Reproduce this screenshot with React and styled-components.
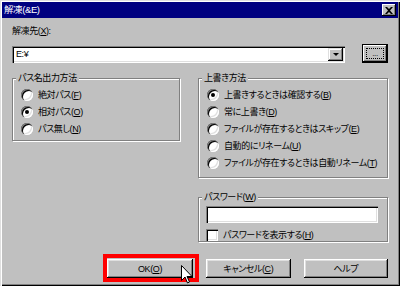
import React from 'react'
import styled, { createGlobalStyle } from 'styled-components'

const Global = createGlobalStyle`
  html, body { margin: 0; padding: 0; background: #c0c0c0; }
  body {
    font-family: "Liberation Sans", "Noto Sans CJK JP", sans-serif;
    font-size: 9px;
    letter-spacing: -0.4px;
    font-feature-settings: "palt";
    color: #000;
  }
`

const Window = styled.div`
  width: 400px;
  height: 286px;
  box-sizing: border-box;
  background: #c0c0c0;
  padding: 2px;
  box-shadow: inset 1px 1px #dfdfdf, inset 2px 2px #fff, inset -1px -1px #000, inset -2px -2px #808080;
  display: flex;
  flex-direction: column;
`

const TitleBar = styled.div`
  height: 16px;
  background: #000080;
  color: #fff;
  display: flex;
  align-items: center;
  justify-content: space-between;
  padding: 0 2px 0 2px;
  font-size: 9.5px;
`

const TitleText = styled.span`
  line-height: 16px;
`

const CloseBox = styled.div`
  width: 14px;
  height: 12px;
  box-sizing: border-box;
  background: #c0c0c0;
  box-shadow: inset -1px -1px #000, inset 1px 1px #fff, inset -2px -2px #808080;
  display: flex;
  align-items: center;
  justify-content: center;
`

const Body = styled.div`
  padding: 0 10px;
  display: flex;
  flex-direction: column;
`

const Caption = styled.div`
  margin-top: 7px;
  line-height: 12px;
  height: 12px;
`

const PathRow = styled.div`
  margin-top: 7px;
  display: flex;
  align-items: flex-end;
`

const Combo = styled.div`
  width: 333px;
  height: 17px;
  box-sizing: border-box;
  background: #fff;
  box-shadow: inset 1px 1px #808080, inset 2px 2px #000, inset -1px -1px #fff, inset -2px -2px #dfdfdf;
  display: flex;
  align-items: center;
  padding: 2px;
`

const ComboText = styled.span`
  flex: 1;
  padding-left: 2px;
  line-height: 13px;
`

const DropButton = styled.div`
  width: 15px;
  height: 13px;
  box-sizing: border-box;
  background: #c0c0c0;
  box-shadow: inset -1px -1px #000, inset 1px 1px #dfdfdf, inset -2px -2px #808080, inset 2px 2px #fff;
  display: flex;
  align-items: center;
  justify-content: center;
`

const Arrow = styled.span`
  width: 0;
  height: 0;
  border-left: 3px solid transparent;
  border-right: 3px solid transparent;
  border-top: 3px solid #000;
`

const BrowseButton = styled.div`
  margin-left: 17px;
  width: 26px;
  height: 19px;
  box-sizing: border-box;
  border: 1px solid #000;
  background: #c0c0c0;
  box-shadow: inset -1px -1px #000, inset 1px 1px #fff, inset -2px -2px #808080;
  display: flex;
  align-items: center;
  justify-content: center;
`

const Focus = styled.span`
  width: 16px;
  height: 9px;
  border: 1px dotted #000;
  display: flex;
  align-items: center;
  justify-content: center;
  font-size: 8px;
  line-height: 8px;
`

const Groups = styled.div`
  margin-top: 15px;
  display: grid;
  grid-template-columns: 168px 190px;
  column-gap: 18px;
  align-items: start;
`

const Column = styled.div`
  display: flex;
  flex-direction: column;
  gap: 19px;
`

const Frame = styled.div`
  position: relative;
  height: ${p => p.h}px;
  box-sizing: border-box;
  border: 1px solid #808080;
  box-shadow: inset 1px 1px #fff, 1px 1px #fff;
  padding: ${p => p.pad || '7px 0 0 8px'};
`

const Legend = styled.span`
  position: absolute;
  top: -7px;
  left: 3px;
  padding: 0 2px;
  background: #c0c0c0;
  line-height: 12px;
`

const Option = styled.div`
  height: 17px;
  display: flex;
  align-items: center;
  gap: 5px;
  white-space: nowrap;
`

const Label = styled.span`
  line-height: 12px;
`

const Radio = styled.span`
  flex-shrink: 0;
  width: 12px;
  height: 12px;
  box-sizing: border-box;
  border-radius: 50%;
  background: #fff;
  box-shadow: inset 1px 1px #808080, inset 2px 2px #000, inset -1px -1px #fff, inset -2px -2px #dfdfdf;
  display: flex;
  align-items: center;
  justify-content: center;
  &::after {
    content: '';
    width: 4px;
    height: 4px;
    border-radius: 50%;
    background: ${p => (p.checked ? '#000' : 'transparent')};
  }
`

const Check = styled.span`
  flex-shrink: 0;
  width: 12px;
  height: 12px;
  box-sizing: border-box;
  background: #fff;
  box-shadow: inset 1px 1px #808080, inset 2px 2px #000, inset -1px -1px #fff, inset -2px -2px #dfdfdf;
`

const TextBox = styled.div`
  width: 172px;
  height: 17px;
  box-sizing: border-box;
  background: #fff;
  box-shadow: inset 1px 1px #808080, inset 2px 2px #000, inset -1px -1px #fff, inset -2px -2px #dfdfdf;
  margin-bottom: 3px;
`

const ButtonRow = styled.div`
  margin-top: 17px;
  padding-left: 95px;
  display: flex;
  gap: 13px;
`

const ButtonWrap = styled.div`
  position: relative;
`

const Button = styled.div`
  width: ${p => p.w || 85}px;
  height: 19px;
  box-sizing: border-box;
  background: #c0c0c0;
  box-shadow: inset -1px -1px #000, inset 1px 1px #fff, inset -2px -2px #808080, inset 2px 2px #dfdfdf;
  display: flex;
  align-items: center;
  justify-content: center;
  line-height: 12px;
`

const Highlight = styled.span`
  position: absolute;
  left: -4px;
  top: -5px;
  right: -6px;
  bottom: -4px;
  border: 4px solid #ff0000;
  pointer-events: none;
`

const Cursor = styled.svg`
  position: absolute;
  left: 74px;
  top: 6px;
`

export default function App() {
  return (
    <>
      <Global />
      <Window>
        <TitleBar>
          <TitleText>解凍(&amp;E)</TitleText>
          <CloseBox>
            <svg width="8" height="7" viewBox="0 0 8 7">
              <path d="M0 0h2l2 2 2-2h2L5 3.5 8 7H6L4 5 2 7H0l3-3.5z" fill="#000" />
            </svg>
          </CloseBox>
        </TitleBar>
        <Body>
          <Caption>解凍先(<u>X</u>):</Caption>
          <PathRow>
            <Combo>
              <ComboText>E:¥</ComboText>
              <DropButton><Arrow /></DropButton>
            </Combo>
            <BrowseButton><Focus>...</Focus></BrowseButton>
          </PathRow>
          <Groups>
            <Frame h={63}>
              <Legend>パス名出力方法</Legend>
              <Option><Radio /><Label>絶対パス(<u>F</u>)</Label></Option>
              <Option><Radio checked /><Label>相対パス(<u>O</u>)</Label></Option>
              <Option><Radio /><Label>パス無し(<u>N</u>)</Label></Option>
            </Frame>
            <Column>
              <Frame h={100}>
                <Legend>上書き方法</Legend>
                <Option><Radio checked /><Label>上書きするときは確認する(<u>B</u>)</Label></Option>
                <Option><Radio /><Label>常に上書き(<u>D</u>)</Label></Option>
                <Option><Radio /><Label>ファイルが存在するときはスキップ(<u>E</u>)</Label></Option>
                <Option><Radio /><Label>自動的にリネーム(<u>U</u>)</Label></Option>
                <Option><Radio /><Label>ファイルが存在するときは自動リネーム(<u>T</u>)</Label></Option>
              </Frame>
              <Frame h={45} pad="8px 0 0 7px">
                <Legend>パスワード(<u>W</u>)</Legend>
                <TextBox />
                <Option><Check /><Label>パスワードを表示する(<u>H</u>)</Label></Option>
              </Frame>
            </Column>
          </Groups>
          <ButtonRow>
            <ButtonWrap>
              <Button w={86}><Label>OK(<u>O</u>)</Label></Button>
              <Highlight />
              <Cursor width="12" height="19" viewBox="0 0 12 19">
                <path d="M0.5 0.5v15l3.5-3.5 2.5 6 2-1-2.5-5.5h5z" fill="#fff" stroke="#000" strokeWidth="1" />
              </Cursor>
            </ButtonWrap>
            <Button w={85}><Label>キャンセル(<u>C</u>)</Label></Button>
            <Button w={85}><Label>ヘルプ</Label></Button>
          </ButtonRow>
        </Body>
      </Window>
    </>
  )
}
